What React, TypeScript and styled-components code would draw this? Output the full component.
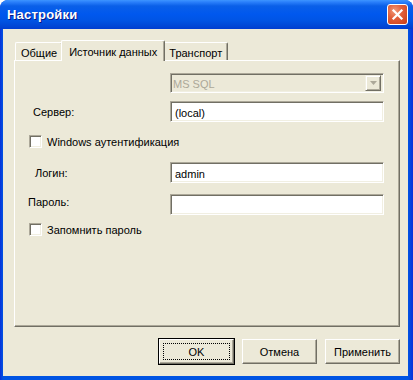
import React from 'react';
import styled, { createGlobalStyle } from 'styled-components';

// Styles
const GlobalStyle = createGlobalStyle`
  html, body {
    margin: 0;
    padding: 0;
    background: #ffffff;
  }
  body {
    font-family: Tahoma, "Liberation Sans", "DejaVu Sans", sans-serif;
    font-size: 11px;
    color: #000000;
  }
`;

const Window = styled.div`
  width: 413px;
  height: 380px;
  display: flex;
  flex-direction: column;
  background: linear-gradient(to right, #0831d9 0, #0054e3 3px, #0054e3 calc(100% - 5px), #0831d9 100%);
  border-radius: 8px 8px 0 0;
  overflow: hidden;
  box-sizing: border-box;
`;

const TitleBar = styled.div`
  height: 29px;
  flex: none;
  display: flex;
  align-items: center;
  justify-content: space-between;
  padding: 0 5px 0 7px;
  background: linear-gradient(
    to bottom,
    #3d95ff 0,
    #2b80fb 2px,
    #0a5fe8 6px,
    #0058ee 14px,
    #0055e5 20px,
    #0047d6 26px,
    #003dd0 29px
  );
`;

const Title = styled.span`
  font-family: "Liberation Sans", Arial, sans-serif;
  font-weight: bold;
  font-size: 13px;
  color: #ffffff;
  text-shadow: 1px 1px 0 #0a1883;
  letter-spacing: 0.2px;
`;

const CloseButton = styled.div`
  width: 21px;
  height: 21px;
  box-sizing: border-box;
  border: 1px solid #ffffff;
  border-radius: 3px;
  background: radial-gradient(circle at 35% 30%, #f19a7a 0, #e2613d 40%, #c93c15 100%);
  display: flex;
  align-items: center;
  justify-content: center;
`;

const Client = styled.div`
  flex: 1;
  margin: 0 5px 4px 3px;
  background: #ece9d8;
  display: flex;
  flex-direction: column;
  padding: 11px 8px 12px 11px;
`;

const TabStrip = styled.div`
  display: flex;
  align-items: flex-end;
  height: 20px;
  padding-left: 1px;
  position: relative;
  z-index: 1;
`;

const Tab = styled.div<{ $active?: boolean }>`
  box-sizing: border-box;
  height: ${(p) => (p.$active ? '21px' : '18px')};
  padding: ${(p) => (p.$active ? '2px 7px 0 7px' : '2px 5px 0 5px')};
  margin: ${(p) => (p.$active ? '0 -2px -1px -2px' : '0')};
  background: #ece9d8;
  border-top: 1px solid #ffffff;
  border-left: 1px solid #ffffff;
  border-right: 1px solid #716f64;
  box-shadow: inset -1px 0 0 #aca899;
  border-radius: 2px 2px 0 0;
  display: flex;
  align-items: center;
  white-space: nowrap;
  position: relative;
  z-index: ${(p) => (p.$active ? 2 : 1)};
`;

const Panel = styled.div`
  flex: 1;
  display: flex;
  flex-direction: column;
  border-top: 1px solid #ffffff;
  border-left: 1px solid #ffffff;
  border-right: 1px solid #716f64;
  border-bottom: 1px solid #716f64;
  box-shadow: inset -1px -1px 0 #aca899;
  padding: 0 15px 0 0;
`;

const Row = styled.div<{ $gap: number }>`
  display: flex;
  align-items: center;
  margin-top: ${(p) => p.$gap}px;
`;

const Label = styled.div<{ $indent: number; $raise?: boolean }>`
  width: ${(p) => 155 - p.$indent}px;
  padding-left: ${(p) => p.$indent}px;
  align-self: ${(p) => (p.$raise ? 'flex-start' : 'center')};
  margin-top: ${(p) => (p.$raise ? '2px' : '0')};
`;

const TextBox = styled.div`
  box-sizing: border-box;
  width: 214px;
  height: 21px;
  background: #ffffff;
  border-top: 1px solid #aca899;
  border-left: 1px solid #aca899;
  border-right: 1px solid #ffffff;
  border-bottom: 1px solid #ffffff;
  box-shadow: inset 1px 1px 0 #716f64, inset -1px -1px 0 #f1efe2;
  padding: 2px 4px 0 4px;
  display: flex;
  align-items: center;
`;

const Combo = styled(TextBox)`
  height: 20px;
  background: #ece9d8;
  color: #aca899;
  padding: 1px 2px 0 2px;
  justify-content: space-between;
`;

const ComboArrow = styled.div`
  box-sizing: border-box;
  width: 16px;
  height: 16px;
  margin-top: -1px;
  background: #ece9d8;
  border-top: 1px solid #f1efe2;
  border-left: 1px solid #f1efe2;
  border-right: 1px solid #716f64;
  border-bottom: 1px solid #716f64;
  box-shadow: inset 1px 1px 0 #ffffff, inset -1px -1px 0 #aca899;
  display: flex;
  align-items: center;
  justify-content: center;
`;

const CheckRow = styled.label<{ $gap: number }>`
  display: flex;
  align-items: center;
  margin-top: ${(p) => p.$gap}px;
  padding-left: 14px;
  gap: 5px;
`;

const CheckBox = styled.span`
  box-sizing: border-box;
  width: 13px;
  height: 13px;
  background: #ffffff;
  border-top: 1px solid #aca899;
  border-left: 1px solid #aca899;
  border-right: 1px solid #ffffff;
  border-bottom: 1px solid #ffffff;
  box-shadow: inset 1px 1px 0 #716f64, inset -1px -1px 0 #f1efe2;
`;

const ButtonBar = styled.div`
  display: flex;
  justify-content: flex-end;
  gap: 8px;
  padding-top: 12px;
`;

const Button = styled.div<{ $default?: boolean }>`
  box-sizing: border-box;
  width: 75px;
  height: 25px;
  background: #ece9d8;
  border-top: 1px solid #ffffff;
  border-left: 1px solid #ffffff;
  border-right: 1px solid #716f64;
  border-bottom: 1px solid #716f64;
  box-shadow: inset -1px -1px 0 #aca899;
  outline: ${(p) => (p.$default ? '1px solid #000000' : 'none')};
  outline-offset: 0;
  display: flex;
  align-items: center;
  justify-content: center;
  position: relative;
`;

const FocusRing = styled.span`
  position: absolute;
  inset: 3px;
  border: 1px dotted #000000;
`;

function App() {
  return (
    <>
      <GlobalStyle />
      <Window>
        <TitleBar>
          <Title>Настройки</Title>
          <CloseButton>
            <svg width="13" height="13" viewBox="0 0 13 13">
              <path d="M2.5 2.5 L10.5 10.5 M10.5 2.5 L2.5 10.5" stroke="#ffffff" strokeWidth="2.2" strokeLinecap="square" />
            </svg>
          </CloseButton>
        </TitleBar>

        <Client>
          <TabStrip>
            <Tab>Общие</Tab>
            <Tab $active>Источник данных</Tab>
            <Tab>Транспорт</Tab>
          </TabStrip>

          <Panel>
            <Row $gap={12}>
              <Label $indent={0} />
              <Combo>
                <span>MS SQL</span>
                <ComboArrow>
                  <svg width="7" height="4" viewBox="0 0 7 4">
                    <path d="M0 0 H7 L3.5 4 Z" fill="#aca899" />
                  </svg>
                </ComboArrow>
              </Combo>
            </Row>

            <Row $gap={8}>
              <Label $indent={18}>Сервер:</Label>
              <TextBox>(local)</TextBox>
            </Row>

            <CheckRow $gap={13}>
              <CheckBox />
              Windows аутентификация
            </CheckRow>

            <Row $gap={14}>
              <Label $indent={20}>Логин:</Label>
              <TextBox>admin</TextBox>
            </Row>

            <Row $gap={11}>
              <Label $indent={13} $raise>Пароль:</Label>
              <TextBox />
            </Row>

            <CheckRow $gap={8}>
              <CheckBox />
              Запомнить пароль
            </CheckRow>
          </Panel>

          <ButtonBar>
            <Button $default>
              <FocusRing />
              OK
            </Button>
            <Button>Отмена</Button>
            <Button>Применить</Button>
          </ButtonBar>
        </Client>
      </Window>
    </>
  );
}

export default App;
